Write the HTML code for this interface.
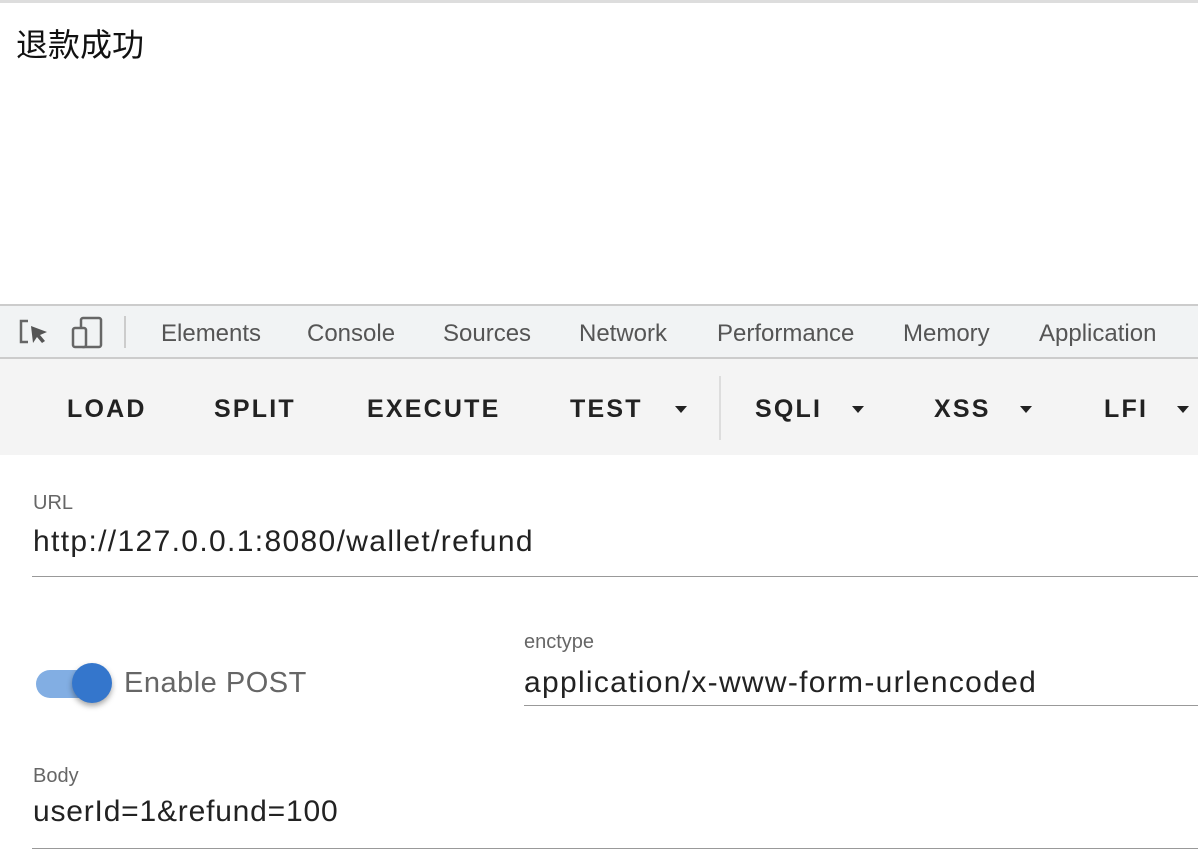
<!DOCTYPE html>
<html><head><meta charset="utf-8"><style>
body{margin:0;width:1198px;height:852px;overflow:hidden;background:#fff;font-family:"Liberation Sans","Noto Sans CJK SC",sans-serif;position:relative}
.a{position:absolute;white-space:nowrap}
.tab{position:absolute;top:320px;font-size:24px;color:#555}
.btn{position:absolute;top:395px;font-size:25px;font-weight:bold;letter-spacing:2.2px;color:#222}
.tri{position:absolute;top:406px;width:0;height:0;border-left:6px solid transparent;border-right:6px solid transparent;border-top:7px solid #222}
.lbl{position:absolute;font-size:20px;color:#666}
.val{position:absolute;font-size:30px;color:#222}
.line{position:absolute;height:1px;background:#999}
</style></head><body>
<div class="a" style="left:0;top:0;width:1198px;height:3px;background:#ddd"></div>
<div class="a" style="left:16px;top:20px;font-size:32px;color:#111">退款成功</div>
<div class="a" style="left:0;top:304px;width:1198px;height:55px;background:#f1f3f4;border-top:2px solid #ccc;border-bottom:2px solid #ccc;box-sizing:border-box"></div>
<svg class="a" style="left:18px;top:316px" width="90" height="34" viewBox="0 0 90 34">
<path d="M10 5H3V26H10" fill="none" stroke="#666" stroke-width="2.5"/><path d="M13 10L29 16L22 19L27 25L24 27L19 21L15 27Z" fill="#555"/>
<rect x="63" y="2" width="20" height="29" rx="2" fill="none" stroke="#666" stroke-width="2.5"/><rect x="55" y="12" width="13" height="19" rx="2" fill="#f1f3f4" stroke="#666" stroke-width="2.5"/>
</svg>
<div class="a" style="left:124px;top:316px;width:2px;height:32px;background:#ccc"></div>
<div class="tab" style="left:161px">Elements</div>
<div class="tab" style="left:307px">Console</div>
<div class="tab" style="left:443px">Sources</div>
<div class="tab" style="left:579px">Network</div>
<div class="tab" style="left:717px">Performance</div>
<div class="tab" style="left:903px">Memory</div>
<div class="tab" style="left:1039px">Application</div>
<div class="a" style="left:0;top:359px;width:1198px;height:96px;background:#f4f4f4"></div>
<div class="btn" style="left:67px">LOAD</div>
<div class="btn" style="left:214px">SPLIT</div>
<div class="btn" style="left:367px">EXECUTE</div>
<div class="btn" style="left:570px">TEST</div><div class="tri" style="left:675px"></div>
<div class="a" style="left:719px;top:376px;width:2px;height:64px;background:#ddd"></div>
<div class="btn" style="left:755px">SQLI</div><div class="tri" style="left:852px"></div>
<div class="btn" style="left:934px">XSS</div><div class="tri" style="left:1020px"></div>
<div class="btn" style="left:1104px">LFI</div><div class="tri" style="left:1177px"></div>
<div class="lbl" style="left:33px;top:492px">URL</div>
<div class="val" style="left:33px;top:525px;letter-spacing:1.35px">http://127.0.0.1:8080/wallet/refund</div>
<div class="line" style="left:32px;top:576px;width:1166px"></div>
<div class="a" style="left:36px;top:670px;width:74px;height:28px;border-radius:14px;background:#82aee3"></div>
<div class="a" style="left:72px;top:663px;width:40px;height:40px;border-radius:50%;background:#3476cc;box-shadow:0 3px 6px rgba(0,0,0,.35)"></div>
<div class="a" style="left:124px;top:667px;font-size:29px;color:#666;letter-spacing:0.5px">Enable POST</div>
<div class="lbl" style="left:524px;top:631px">enctype</div>
<div class="val" style="left:524px;top:666px;letter-spacing:1.3px">application/x-www-form-urlencoded</div>
<div class="line" style="left:524px;top:705px;width:674px"></div>
<div class="lbl" style="left:33px;top:765px">Body</div>
<div class="val" style="left:33px;top:795px;letter-spacing:0.8px">userId=1&amp;refund=100</div>
<div class="line" style="left:32px;top:848px;width:1166px"></div>
</body></html>
